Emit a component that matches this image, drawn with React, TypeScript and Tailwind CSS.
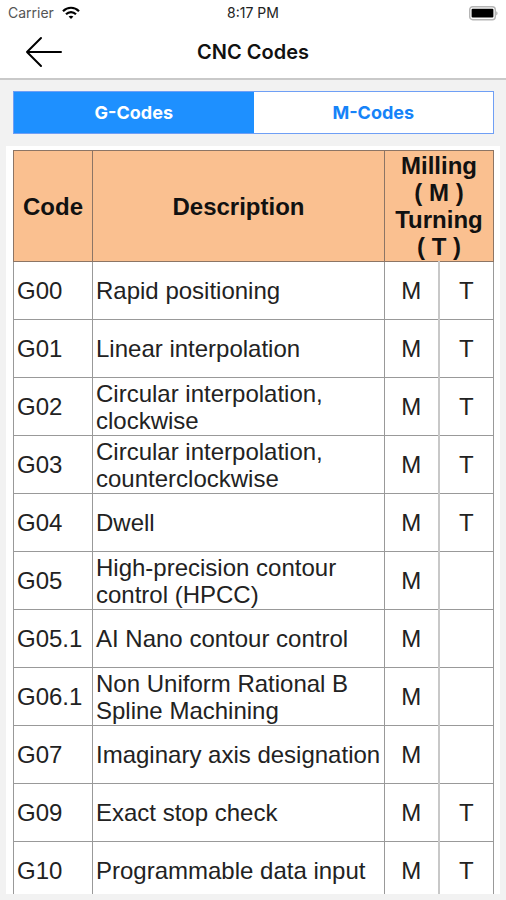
import { useState } from 'react';

type Row = { code: string; description: string; milling: boolean; turning: boolean };

const rows: Row[] = [
  { code: 'G00', description: 'Rapid positioning', milling: true, turning: true },
  { code: 'G01', description: 'Linear interpolation', milling: true, turning: true },
  { code: 'G02', description: 'Circular interpolation, clockwise', milling: true, turning: true },
  { code: 'G03', description: 'Circular interpolation, counterclockwise', milling: true, turning: true },
  { code: 'G04', description: 'Dwell', milling: true, turning: true },
  { code: 'G05', description: 'High-precision contour control (HPCC)', milling: true, turning: false },
  { code: 'G05.1', description: 'AI Nano contour control', milling: true, turning: false },
  { code: 'G06.1', description: 'Non Uniform Rational B Spline Machining', milling: true, turning: false },
  { code: 'G07', description: 'Imaginary axis designation', milling: true, turning: false },
  { code: 'G09', description: 'Exact stop check', milling: true, turning: true },
  { code: 'G10', description: 'Programmable data input', milling: true, turning: true },
];

function StatusBar() {
  return (
    <div className="grid h-[26px] grid-cols-3 items-center px-2 text-sm leading-4 text-[#222222]">
      <div className="flex items-center gap-2">
        <span className="text-[#555555]">Carrier</span>
        <svg width="18" height="14" viewBox="0 0 18 14" fill="none" stroke="#000" aria-hidden="true">
          <path d="M1 5.2C5.6 0.6 12.4 0.6 17 5.2" strokeWidth="2.2" />
          <path d="M4 8.2C6.9 5.3 11.1 5.3 14 8.2" strokeWidth="2.2" />
          <path d="M9 13L6.6 10.6C8 9.4 10 9.4 11.4 10.6Z" fill="#000" stroke="none" />
        </svg>
      </div>
      <span className="text-center">8:17 PM</span>
      <svg className="justify-self-end" width="29" height="15" viewBox="0 0 29 15" aria-hidden="true">
        <rect x="0.7" y="0.7" width="25.6" height="13" rx="3" fill="#fff" stroke="#b5b5b5" strokeWidth="1.4" />
        <rect x="2.6" y="2.8" width="21.8" height="8.8" rx="1" fill="#000" />
        <path d="M27.4 5.2C28.8 5.8 28.8 8.8 27.4 9.4Z" fill="#999" />
      </svg>
    </div>
  );
}

export default function App() {
  const [tab, setTab] = useState<'G' | 'M'>('G');
  const active = 'bg-[#1e90ff] text-white';
  const idle = 'bg-white text-[#1683f8]';

  return (
    <div className="flex h-screen flex-col bg-[#f2f2f2] font-['Inter',sans-serif]">
      <header className="border-b-2 border-[#c9c9c9] bg-white">
        <StatusBar />
        <div className="grid h-[52px] grid-cols-[1fr_auto_1fr] items-center px-6">
          <button type="button" aria-label="Back" className="justify-self-start">
            <svg width="38" height="32" viewBox="0 0 38 32" fill="none" stroke="#000" strokeWidth="2" strokeLinecap="round" strokeLinejoin="round">
              <path d="M17 2L3 16L17 30M3 16H37" />
            </svg>
          </button>
          <h1 className="text-xl font-semibold text-[#111111]">CNC Codes</h1>
        </div>
      </header>

      <div className="mt-[11px] mr-3 ml-[13px] flex h-[43px] border border-[#6f9ff5] text-lg font-bold">
        <button type="button" onClick={() => setTab('G')} className={`flex-1 ${tab === 'G' ? active : idle}`}>
          G-Codes
        </button>
        <button type="button" onClick={() => setTab('M')} className={`flex-1 ${tab === 'M' ? active : idle}`}>
          M-Codes
        </button>
      </div>

      <main className="mx-[6px] mt-3 mb-[6px] min-h-0 flex-1 overflow-hidden bg-white pt-1 pr-[6px] pl-[7px]">
        <table className="w-full table-fixed border-collapse font-['Liberation_Sans',Arial,sans-serif] text-2xl leading-[27px] text-[#222222]">
          <colgroup>
            <col className="w-[79px]" />
            <col />
            <col className="w-[54px]" />
            <col className="w-[55px]" />
          </colgroup>
          <thead>
            <tr className="h-[111px] bg-[#fac090] text-[#111111]">
              <th className="border border-[#8c7565]">Code</th>
              <th className="border border-[#8c7565]">Description</th>
              <th colSpan={2} className="border border-[#8c7565]">
                Milling
                <br />( M )<br />
                Turning
                <br />( T )
              </th>
            </tr>
          </thead>
          <tbody>
            {rows.map((row) => (
              <tr key={row.code} className="h-[58px]">
                <td className="border border-[#999999] pl-[3px]">{row.code}</td>
                <td className="border border-[#999999] pl-[3px]">{row.description}</td>
                <td className="border border-r-2 border-[#999999] border-r-[#c8c8c8] text-center">{row.milling ? 'M' : ''}</td>
                <td className="border border-[#999999] text-center">{row.turning ? 'T' : ''}</td>
              </tr>
            ))}
          </tbody>
        </table>
      </main>
    </div>
  );
}
